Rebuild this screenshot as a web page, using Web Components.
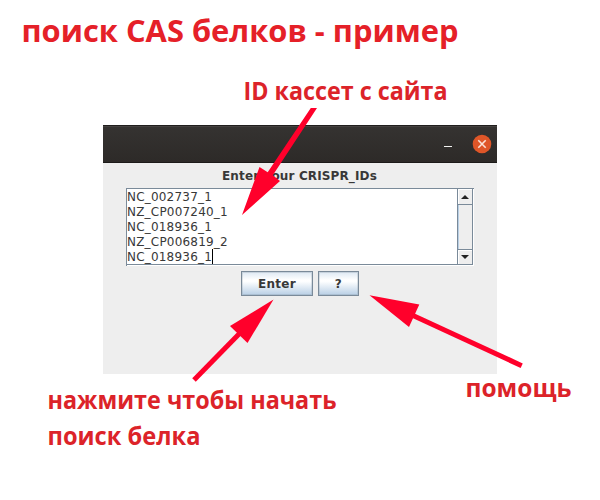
<!DOCTYPE html>
<html lang="ru">
<head>
<meta charset="utf-8">
<title>CAS</title>
<style>
html, body { margin: 0; background: #fff; }
body { width: 600px; height: 500px; overflow: hidden; }
</style>
</head>
<body>
<demo-stage>
  <swing-window>
    <swing-label>Enter your CRISPR_IDs</swing-label>
    <swing-textarea>NC_002737_1
NZ_CP007240_1
NC_018936_1
NZ_CP006819_2
NC_018936_1</swing-textarea>
    <div slot="actions" style="display:contents"><swing-button style="width:72px">Enter</swing-button><swing-button style="width:41px">?</swing-button></div>
  </swing-window>
  <note-layer slot="notes"></note-layer>
</demo-stage>
<script>
const define = (name, html) => customElements.define(name, class extends HTMLElement {
  constructor() {
    super();
    this.attachShadow({ mode: 'open' }).innerHTML = html;
  }
});

define('demo-stage', `<style>
  :host { display: block; position: relative; width: 600px; height: 500px; box-sizing: border-box; padding: 125px 103px 0; }
</style><slot></slot><slot name="notes"></slot>`);

define('title-bar', `<style>
  :host { display: flex; justify-content: flex-end; align-items: center; gap: 20px; height: 38px; box-sizing: border-box; padding-right: 5px;
    background: linear-gradient(#353331, #2d2a28); border-top: 1px solid #201e1d; border-bottom: 1px solid #1c1a19; box-shadow: inset 0 1px #454240; }
  i { width: 8px; height: 1px; background: #f2f2f0; margin-top: 4px; }
  svg { display: block; }
</style><i></i><svg width="20" height="20" viewBox="0 0 20 20"><circle cx="10" cy="10" r="9.3" fill="#df5628"/><path d="M6.3 6.3 13.7 13.7M13.7 6.3 6.3 13.7" stroke="#fbe3d8" stroke-width="1.6"/></svg>`);

define('swing-window', `<style>
  :host { display: flex; flex-direction: column; width: 394px; height: 249px; background: #eee; font: 12px "DejaVu Sans", sans-serif; color: #383838; }
  .form { display: flex; flex-direction: column; align-items: center; padding-top: 5px; }
  .actions { display: flex; gap: 5px; padding-top: 5px; }
</style><title-bar></title-bar><div class="form"><slot></slot><div class="actions"><slot name="actions"></slot></div></div>`);

define('swing-label', `<style>
  :host { display: block; font-weight: bold; line-height: 15px; padding: 1px 0 4px; margin-right: 1px; letter-spacing: .13px; }
</style><slot></slot>`);

define('swing-scrollbar', `<style>
  :host { display: flex; flex-direction: column; justify-content: space-between; width: 15px; box-sizing: border-box; background: #eee; border-left: 1px solid #7a8a99; box-shadow: inset 1px 0 #b8cfe5; }
  span { display: flex; height: 15px; align-items: center; justify-content: center; background: #eee; box-shadow: inset 1px 1px #fff; }
  .up { border-bottom: 1px solid #7a8a99; }
  .down { height: 14px; border-top: 1px solid #7a8a99; }
</style><span class="up"><svg width="8" height="4"><path d="M4 0 8 4H0Z" fill="#222"/></svg></span><span class="down"><svg width="8" height="4"><path d="M0 0H8L4 4Z" fill="#222"/></svg></span>`);

define('swing-textarea', `<style>
  :host { display: flex; width: 348px; height: 78px; box-sizing: border-box; background: #fff; border: 1px solid #7a8a99; border-right: 0; border-bottom: 0; box-shadow: inset -1px -1px #fff, inset -2px -2px #7a8a99; padding: 0 2px 2px 0; }
  .text { flex: 1; white-space: pre; line-height: 15px; padding-top: 1px; height: 74px; letter-spacing: .2px; }
  i { display: inline-block; width: 1px; height: 15px; background: #000; vertical-align: top; margin: -1px 0 0 0; }
</style><div class="text"><slot></slot><i></i></div><swing-scrollbar></swing-scrollbar>`);

define('swing-button', `<style>
  :host { display: flex; height: 25px; box-sizing: border-box; align-items: center; justify-content: center; border: 1px solid #7a8a99; font-weight: bold; letter-spacing: .3px;
    background: linear-gradient(#dde8f3 0, #fff 35%, #fdfeff 42%, #b8cfe5 100%); box-shadow: inset 0 0 0 1px rgba(122,138,153,.25); }
</style><slot></slot>`);

define('note-layer', `<style>
  :host { position: absolute; inset: 0; }
  svg { display: block; }
  text { font: bold 24.5px "Open Sans", "Noto Sans", sans-serif; fill: #dc2329; }
  .title { font-size: 31px; fill: #e52028; }
  path { fill: #ff002b; }
  line { stroke: #ff002b; stroke-width: 5; }
</style><svg width="600" height="500">
  <line x1="194" y1="380" x2="240" y2="333"/><path d="M273.5 299.5 230 326 247.5 343Z"/>
  <line x1="521.7" y1="365.7" x2="413" y2="315.5"/><path d="M369.5 295.3 419.3 304.5 409 327Z"/>
  <path d="M242 215 259.5 167 267.7 172.2 310.8 108H317L272.8 175.3 280 181Z"/>
  <text class="title" x="21.5" y="42" textLength="437" lengthAdjust="spacingAndGlyphs">поиск CAS белков - пример</text>
  <text x="243.5" y="100" textLength="204" lengthAdjust="spacingAndGlyphs">ID кассет с сайта</text>
  <text x="47.5" y="409" textLength="289" lengthAdjust="spacingAndGlyphs">нажмите чтобы начать</text>
  <text x="47.5" y="445" textLength="153" lengthAdjust="spacingAndGlyphs">поиск белка</text>
  <text x="465.5" y="397" textLength="106" lengthAdjust="spacingAndGlyphs">помощь</text>
</svg>`);
</script>
</body>
</html>
